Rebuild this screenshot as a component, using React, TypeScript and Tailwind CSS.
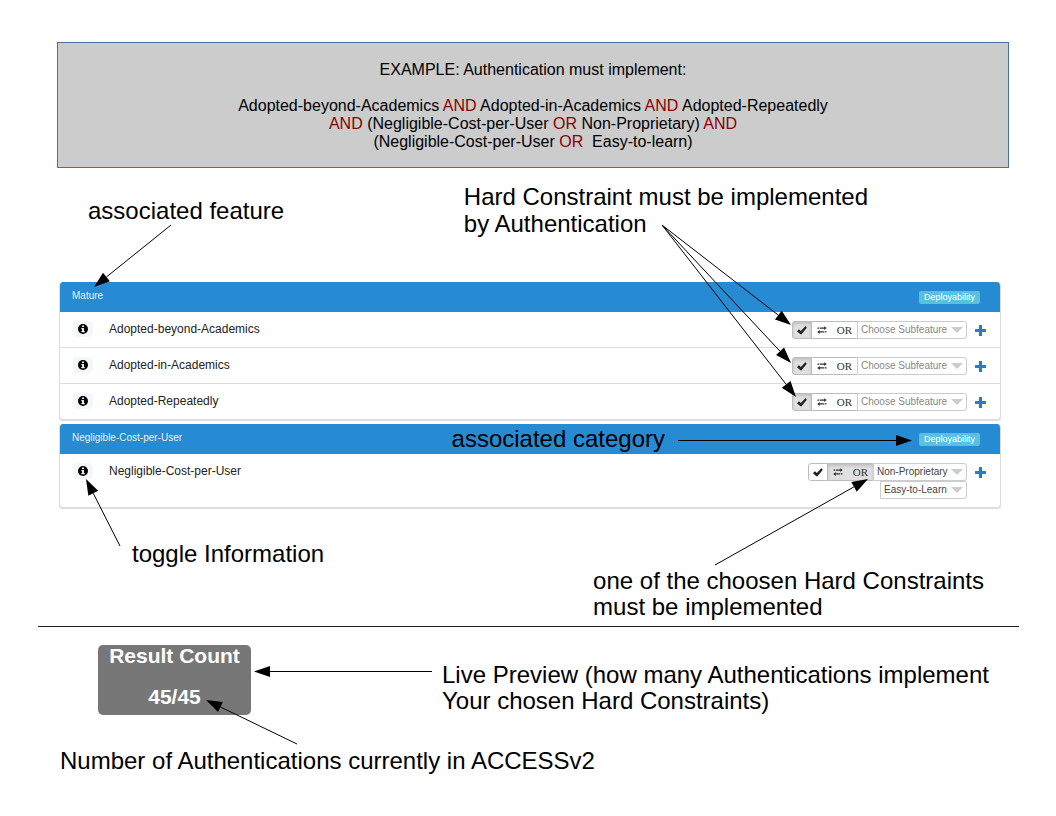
import React, { useState } from "react";

type Point = [number, number];

function Arrow({ from, to }: { from: Point; to: Point }) {
  const dx = to[0] - from[0];
  const dy = to[1] - from[1];
  const len = Math.hypot(dx, dy);
  const ux = dx / len;
  const uy = dy / len;
  const bx = to[0] - ux * 16;
  const by = to[1] - uy * 16;
  const head = [
    [to[0], to[1]],
    [bx - uy * 5.5, by + ux * 5.5],
    [bx + uy * 5.5, by - ux * 5.5],
  ]
    .map((p) => p.join(","))
    .join(" ");
  return (
    <g>
      <line x1={from[0]} y1={from[1]} x2={bx} y2={by} stroke="#000" strokeWidth="1" />
      <polygon points={head} fill="#000" />
    </g>
  );
}

function InfoIcon() {
  return (
    <svg viewBox="0 0 12 12" className="size-[10px]" aria-hidden="true">
      <circle cx="6" cy="6" r="6" fill="#000" />
      <path d="M4.9 1.8h2.2v1.9H4.9zM4.1 4.7h3v3.8h.9v1.5H4.1V8.5H5V6.2h-.9z" fill="#fff" />
    </svg>
  );
}

function CheckIcon() {
  return (
    <svg viewBox="0 0 10 9" className="h-[9px] w-[10px]" fill="#222" aria-hidden="true">
      <path d="M.2 5.1 1.7 3.5q.3-.3.6 0L3.8 5 8.1.5q.3-.3.6 0l.9.9q.3.3 0 .6L4.5 8.3q-.5.6-1 0L.2 5.6q-.2-.2 0-.5z" />
    </svg>
  );
}

function SwapIcon() {
  return (
    <svg viewBox="0 0 10 8" className="h-2 w-[10px]" fill="currentColor" aria-hidden="true">
      <path d="M.5 1.4h1.6v1.3H.5zM2.7 1.4h4.5V.2L9.8 2 7.2 3.9V2.7H2.7z" />
      <path d="M9.5 5.3H7.9v1.3h1.6zM7.3 5.3H2.8V4.1L.2 6l2.6 1.9V6.6h4.5z" />
    </svg>
  );
}

function PlusIcon() {
  return (
    <svg viewBox="0 0 11 11" className="size-[11px]" fill="#2f7abf" aria-hidden="true">
      <path d="M4.4 0h2.2a.5.5 0 0 1 .5.5v3.4h3.4a.5.5 0 0 1 .5.5v2.2a.5.5 0 0 1-.5.5H7.1v3.4a.5.5 0 0 1-.5.5H4.4a.5.5 0 0 1-.5-.5V7.1H.5a.5.5 0 0 1-.5-.5V4.4a.5.5 0 0 1 .5-.5h3.4V.5a.5.5 0 0 1 .5-.5z" />
    </svg>
  );
}

const options = ["Choose Subfeature", "Non-Proprietary", "Easy-to-Learn"];

function SubfeatureSelect({ initial, shape }: { initial: string; shape: string }) {
  const [value, setValue] = useState(initial);
  const tone = value === options[0] ? "text-[#888]" : "text-[#444]";
  return (
    <div className={`relative h-[18px] ${shape}`}>
      <select
        aria-label="Subfeature"
        value={value}
        onChange={(e) => setValue(e.target.value)}
        className={`block h-full w-full appearance-none rounded-r-[3px] border border-[#ccc] bg-white pb-px pl-[3px] text-[10px] leading-[14px] ${tone}`}
      >
        {options.map((o) => (
          <option key={o}>{o}</option>
        ))}
      </select>
      <svg viewBox="0 0 12 6" className="pointer-events-none absolute right-1 top-[6px] h-[6px] w-3" aria-hidden="true">
        <path d="M0 0h12L6 6z" fill="#ccc" />
      </svg>
    </div>
  );
}

interface Feature {
  name: string;
  mode: "must" | "or";
  subs: string[];
}

function FeatureRow({ feature }: { feature: Feature }) {
  const [mode, setMode] = useState(feature.mode);
  const on = "bg-[#e0e0e0] shadow-[inset_0_2px_3px_rgba(0,0,0,0.15)]";
  return (
    <li className="flex items-start border-b border-[#ddd] pb-2 pl-[13px] pr-[14px] pt-[9px] last:border-b-0">
      <button type="button" aria-label={`Information about ${feature.name}`} className="flex h-4 w-5 items-center justify-center rounded-sm bg-[#f3f7fb]">
        <InfoIcon />
      </button>
      <span className="ml-4 text-xs leading-4 text-[#222]">{feature.name}</span>
      <div className="ml-auto flex flex-col items-end">
        <div className="flex">
          <button
            type="button"
            aria-label="Must be implemented"
            aria-pressed={mode === "must"}
            onClick={() => setMode("must")}
            className={`flex h-[18px] w-5 items-center justify-center rounded-l-[3px] border border-[#bbb] ${mode === "must" ? on : "bg-white"}`}
          >
            <CheckIcon />
          </button>
          <button
            type="button"
            aria-pressed={mode === "or"}
            onClick={() => setMode("or")}
            className={`flex h-[18px] w-[45px] items-center justify-between border-y border-[#bbb] px-[5px] font-['Liberation_Serif',serif] text-[11px] text-[#333] ${mode === "or" ? on : "bg-white"}`}
          >
            <SwapIcon />
            OR
          </button>
          <SubfeatureSelect initial={feature.subs[0]} shape={feature.mode === "must" ? "w-[110px]" : "w-[94px]"} />
        </div>
        {feature.subs.slice(1).map((s) => (
          <SubfeatureSelect key={s} initial={s} shape="w-[87px]" />
        ))}
      </div>
      <button type="button" aria-label="Add subfeature" className="ml-2 flex h-[18px] items-center">
        <PlusIcon />
      </button>
    </li>
  );
}

function Panel({ title, features }: { title: string; features: Feature[] }) {
  return (
    <section className="overflow-hidden rounded-[4px] border border-t-0 border-[#ddd] bg-white shadow-[0_1px_1px_rgba(0,0,0,0.15)]">
      <header className="flex h-[30px] items-center justify-between bg-[#268bd2] pl-3 pr-5">
        <h2 className="pb-[2px] text-[10px] leading-4 text-[#e4f1fa]">{title}</h2>
        <span className="h-[13px] rounded-[2px] bg-[#5bc0de] px-[5px] text-[9px] leading-3 text-white">Deployability</span>
      </header>
      <ul>
        {features.map((f) => (
          <FeatureRow key={f.name} feature={f} />
        ))}
      </ul>
    </section>
  );
}

const mature: Feature[] = [
  { name: "Adopted-beyond-Academics", mode: "must", subs: [options[0]] },
  { name: "Adopted-in-Academics", mode: "must", subs: [options[0]] },
  { name: "Adopted-Repeatedly", mode: "must", subs: [options[0]] },
];

const cost: Feature[] = [
  { name: "Negligible-Cost-per-User", mode: "or", subs: [options[1], options[2]] },
];

function Op({ children }: { children: string }) {
  return <span className="text-[#8b0000]">{children}</span>;
}

export default function App() {
  return (
    <main className="relative min-h-screen bg-white pt-[42px] font-['Liberation_Sans',Arial,sans-serif] text-black">
      <div className="ml-[57px] mr-[47px] border border-[#4a6fa0] bg-[#ccc] pb-4 pt-[18px] text-center text-base leading-[18px]">
        <p>EXAMPLE: Authentication must implement:</p>
        <p className="mt-[18px]">
          Adopted-beyond-Academics <Op>AND</Op> Adopted-in-Academics <Op>AND</Op> Adopted-Repeatedly
        </p>
        <p>
          <Op>AND</Op> (Negligible-Cost-per-User <Op>OR</Op> Non-Proprietary) <Op>AND</Op>
        </p>
        <p>
          (Negligible-Cost-per-User <Op>OR</Op>&nbsp; Easy-to-learn)
        </p>
      </div>

      <div className="flex items-center justify-between pl-[88px] pr-[188px] pt-[15px] text-2xl leading-[27px]">
        <p>associated feature</p>
        <p>
          Hard Constraint must be implemented
          <br />
          by Authentication
        </p>
      </div>

      <div className="ml-[59px] mr-[55px] mt-[45px] flex flex-col gap-1">
        <Panel title="Mature" features={mature} />
        <div className="relative">
          <Panel title="Negligible-Cost-per-User" features={cost} />
          <p className="absolute right-[336px] top-px text-2xl leading-[27px]">associated category</p>
        </div>
      </div>

      <div className="flex justify-between pl-[132px] pr-[72px] pt-8 text-2xl leading-[27px]">
        <p>toggle Information</p>
        <p className="pt-7 leading-[26px]">
          one of the choosen Hard Constraints
          <br />
          must be implemented
        </p>
      </div>

      <hr className="ml-[38px] mr-[37px] mt-[6px] border-[#222]" />

      <div className="flex items-start pl-[98px] pt-[18px]">
        <div className="h-[70px] w-[153px] rounded-[5px] bg-[#777] text-center text-[21px] font-bold leading-[22px] text-white">
          <p>Result Count</p>
          <p className="mt-[19px]">45/45</p>
        </div>
        <p className="ml-[191px] mt-[17px] text-2xl leading-[26px]">
          Live Preview (how many Authentications implement
          <br />
          Your chosen Hard Constraints)
        </p>
      </div>
      <p className="pl-[60px] pt-8 text-2xl leading-[27px]">Number of Authentications currently in ACCESSv2</p>

      <svg className="pointer-events-none absolute left-0 top-0 h-[816px] w-[528px]" viewBox="0 0 528 816" aria-hidden="true">
        <Arrow from={[171, 225]} to={[94, 287]} />
        <Arrow from={[120, 546]} to={[86, 479]} />
        <Arrow from={[432, 671.5]} to={[254, 671.5]} />
        <Arrow from={[297, 744]} to={[206, 700]} />
      </svg>
      <svg className="pointer-events-none absolute right-0 top-0 h-[816px] w-[528px]" viewBox="528 0 528 816" aria-hidden="true">
        <Arrow from={[662, 225]} to={[791, 325]} />
        <Arrow from={[662, 225]} to={[791, 363]} />
        <Arrow from={[662, 225]} to={[796, 397]} />
        <Arrow from={[678, 440.5]} to={[912, 440.5]} />
        <Arrow from={[715, 565]} to={[868, 479]} />
      </svg>
    </main>
  );
}
